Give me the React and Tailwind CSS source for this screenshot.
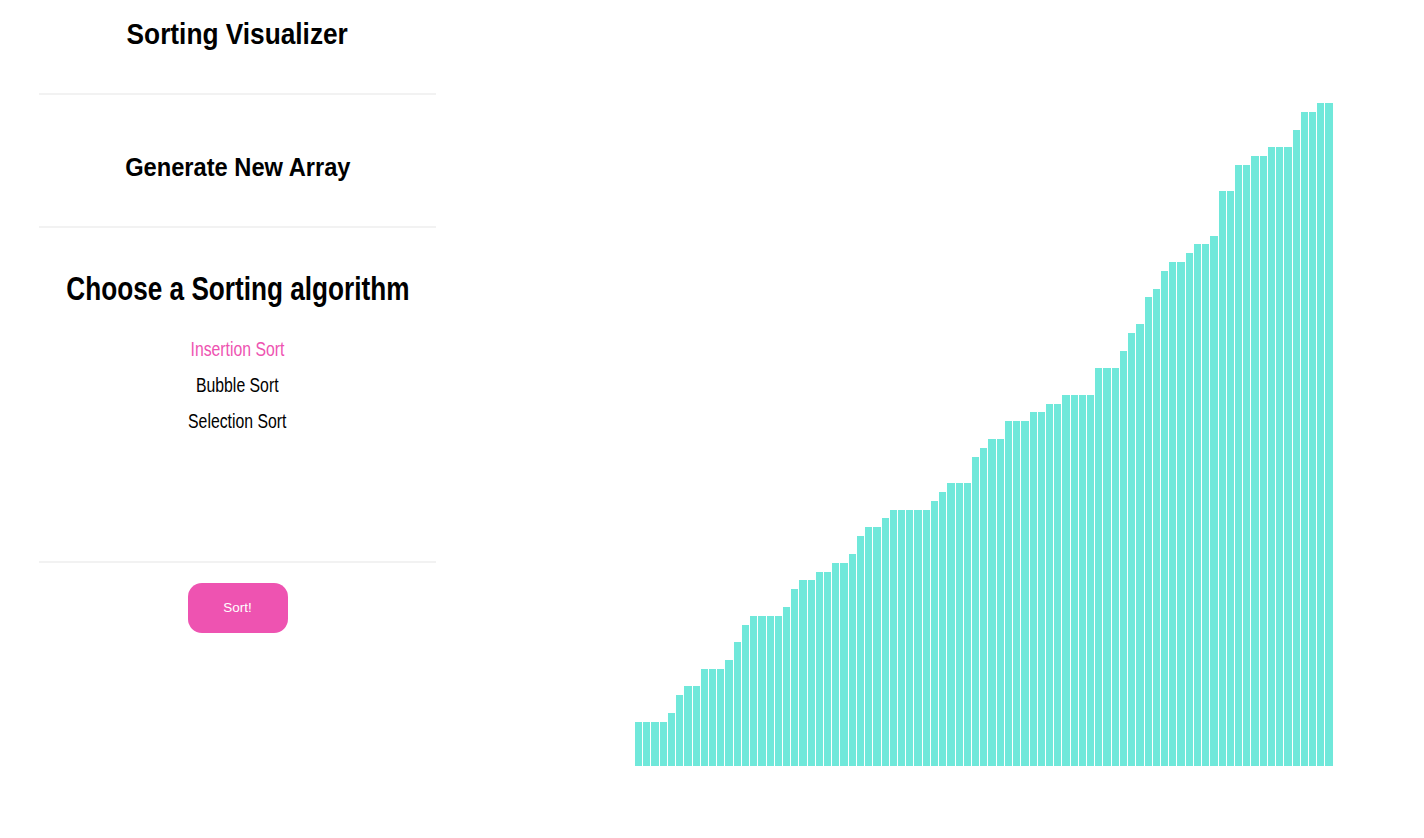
const values = [
  5, 5, 5, 5, 6, 8, 9, 9, 11, 11, 11, 12, 14, 16, 17, 17, 17, 17, 18, 20, 21, 21, 22, 22, 23, 23, 24, 26, 27, 27,
  28, 29, 29, 29, 29, 29, 30, 31, 32, 32, 32, 35, 36, 37, 37, 39, 39, 39, 40, 40, 41, 41, 42, 42, 42, 42, 45, 45,
  45, 47, 49, 50, 53, 54, 56, 57, 57, 58, 59, 59, 60, 65, 65, 68, 68, 69, 69, 70, 70, 70, 72, 74, 74, 75, 75,
];

const algorithms = ["Insertion Sort", "Bubble Sort", "Selection Sort"];

function Divider() {
  return <div className="border-t-2 border-[#f2f2f2]" />;
}

export default function App() {
  const selected = "Insertion Sort";

  return (
    <div className="flex h-screen bg-white text-black font-['Liberation_Sans',Arial,sans-serif]">
      {/* Sidebar */}
      <aside className="w-[475px] shrink-0 px-[39px] flex flex-col text-center">
        <h1 className="mt-[3px] flex justify-center text-[29px] font-bold leading-[62px] h-[62px] whitespace-nowrap">
          <span className="inline-block scale-x-[0.905]">Sorting Visualizer</span>
        </h1>
        <div className="mt-[28px]">
          <Divider />
        </div>

        <button className="mt-[52px] h-[40px] flex justify-center text-[26px] font-bold leading-[40px] whitespace-nowrap cursor-pointer">
          <span className="inline-block scale-x-[0.91]">Generate New Array</span>
        </button>
        <div className="mt-[39px]">
          <Divider />
        </div>

        <h2 className="mt-[40px] h-[40px] flex justify-center text-[34px] font-bold leading-[40px] whitespace-nowrap">
          <span className="inline-block scale-x-[0.77]">Choose a Sorting algorithm</span>
        </h2>

        <ul className="mt-[23px] flex flex-col">
          {algorithms.map((a) => (
            <li
              key={a}
              className={`h-[36px] leading-[36px] text-[20px] cursor-pointer ${
                a === selected ? "text-[#ee53b1]" : "text-black"
              }`}
            >
              <span className="inline-block scale-x-[0.79]">{a}</span>
            </li>
          ))}
        </ul>

        <div className="mt-[122px]">
          <Divider />
        </div>

        <div className="mt-[20px] flex justify-center">
          <button className="w-[100px] h-[50px] rounded-[14px] bg-[#ee53b1] text-white text-[13.5px]">
            Sort!
          </button>
        </div>
      </aside>

      {/* Bars */}
      <main className="flex-1 flex items-end pl-[160px] pb-[72px]">
        <div className="w-[697px] flex items-end gap-px">
          {values.map((v, i) => (
            <div key={i} className="flex-1 bg-[#70e8da]" style={{ height: `${v * 8.84}px` }} />
          ))}
        </div>
      </main>
    </div>
  );
}
